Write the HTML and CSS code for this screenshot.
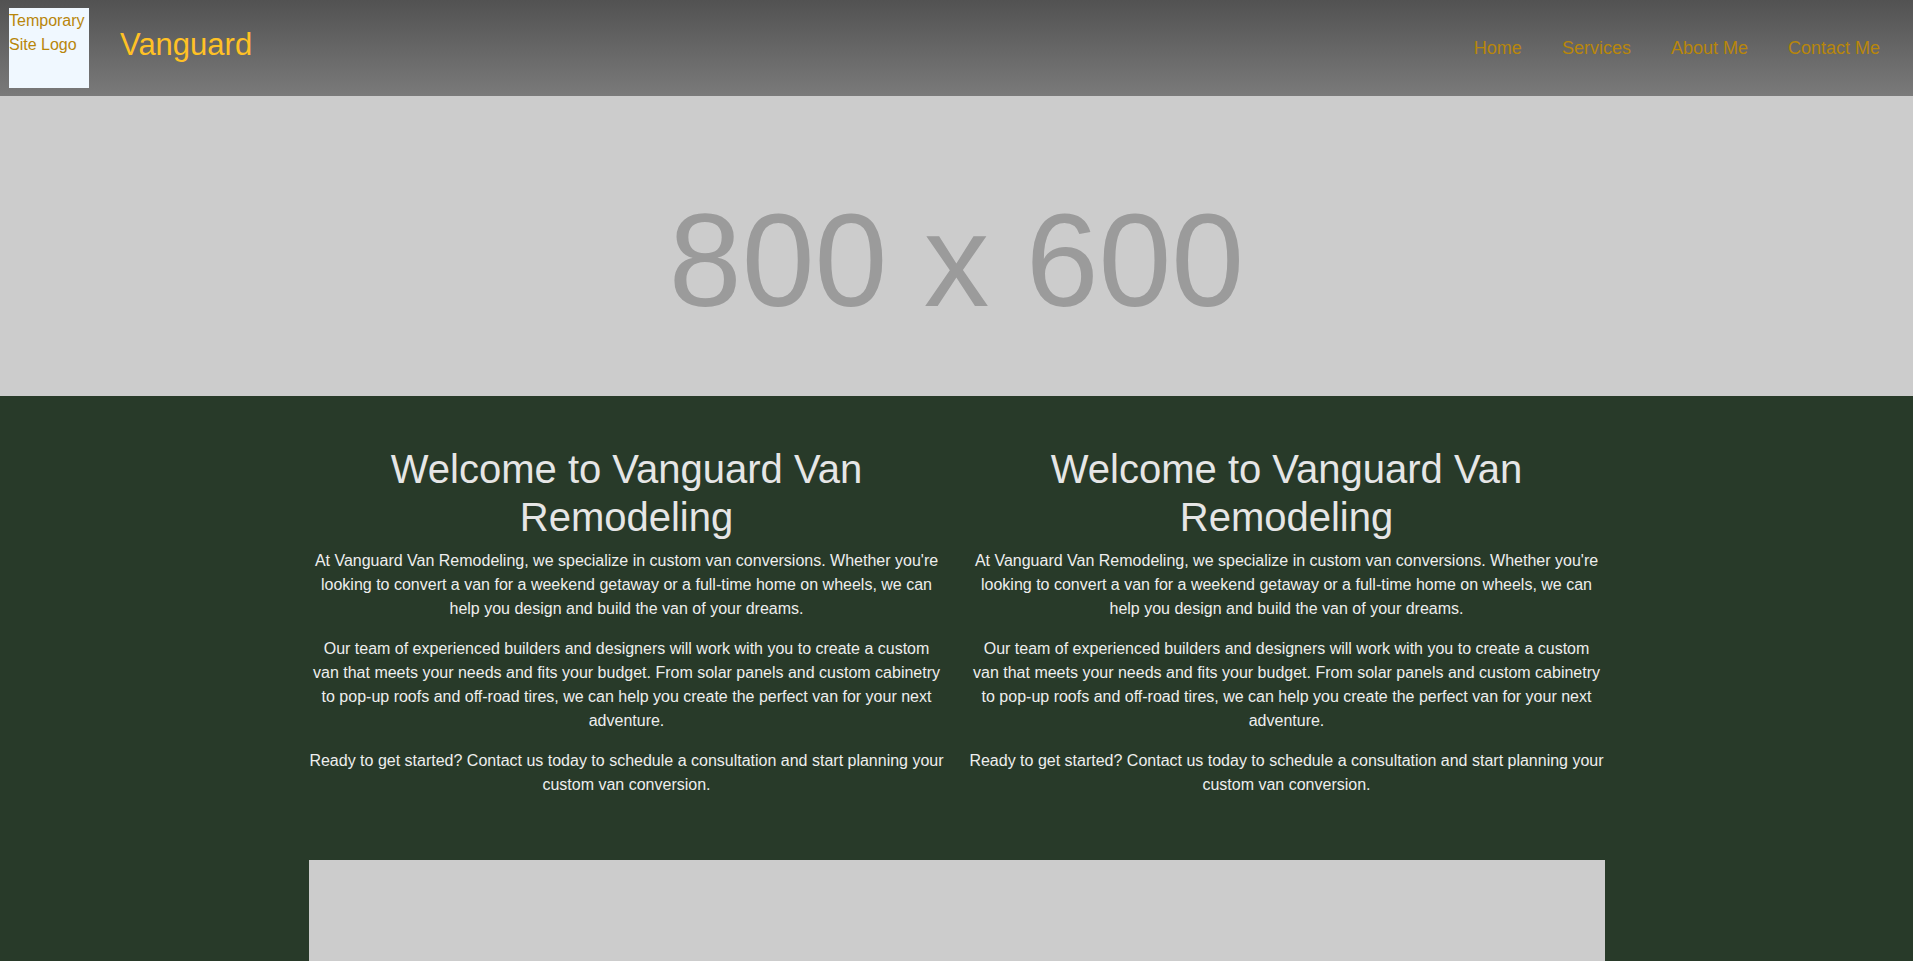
FILE: index.html
```html
<!DOCTYPE html>
<html lang="en">
<head>
<meta charset="utf-8">
<title>Vanguard Van Remodeling</title>
<link rel="stylesheet" href="styles.css">
</head>
<body>
<header class="site-header">
  <div class="brand">
    <div class="logo">Temporary Site Logo</div>
    <div class="site-name">Vanguard</div>
  </div>
  <nav class="main-nav">
    <a href="#">Home</a>
    <a href="#">Services</a>
    <a href="#">About Me</a>
    <a href="#">Contact Me</a>
  </nav>
</header>
<section class="hero">
  <div class="hero-text">800 x 600</div>
</section>
<main class="content">
  <div class="container">
    <div class="columns">
      <article class="col">
        <h2>Welcome to Vanguard Van Remodeling</h2>
        <p>At Vanguard Van Remodeling, we specialize in custom van conversions. Whether you're looking to convert a van for a weekend getaway or a full-time home on wheels, we can help you design and build the van of your dreams.</p>
        <p>Our team of experienced builders and designers will work with you to create a custom van that meets your needs and fits your budget. From solar panels and custom cabinetry to pop-up roofs and off-road tires, we can help you create the perfect van for your next adventure.</p>
        <p>Ready to get started? Contact us today to schedule a consultation and start planning your custom van conversion.</p>
      </article>
      <article class="col">
        <h2>Welcome to Vanguard Van Remodeling</h2>
        <p>At Vanguard Van Remodeling, we specialize in custom van conversions. Whether you're looking to convert a van for a weekend getaway or a full-time home on wheels, we can help you design and build the van of your dreams.</p>
        <p>Our team of experienced builders and designers will work with you to create a custom van that meets your needs and fits your budget. From solar panels and custom cabinetry to pop-up roofs and off-road tires, we can help you create the perfect van for your next adventure.</p>
        <p>Ready to get started? Contact us today to schedule a consultation and start planning your custom van conversion.</p>
      </article>
    </div>
    <div class="placeholder"></div>
  </div>
</main>
</body>
</html>
```
FILE: styles.css
```css
html, body {
  margin: 0;
  padding: 0;
}
body {
  font-family: "Liberation Sans", Arial, sans-serif;
  font-size: 16px;
  line-height: 1.5;
  background: #283a29;
  overflow: hidden;
}
.site-header {
  height: 96px;
  box-sizing: border-box;
  padding: 8px 33px 8px 9px;
  display: flex;
  justify-content: space-between;
  align-items: flex-start;
  background: linear-gradient(#525252, #7a7a7a);
}
.brand {
  display: flex;
  align-items: flex-start;
}
.logo {
  width: 80px;
  height: 80px;
  box-sizing: border-box;
  padding-top: 1px;
  background: #f0f8ff;
  color: #b8860b;
  font-size: 16px;
  line-height: 24px;
}
.site-name {
  margin-left: 31px;
  margin-top: 14px;
  font-size: 31px;
  line-height: 46px;
  color: #ffc125;
}
.main-nav {
  display: flex;
  gap: 40px;
  margin-top: 27px;
}
.main-nav a {
  color: #b8860b;
  text-decoration: none;
  font-size: 18px;
  line-height: 27px;
}
.hero {
  height: 300px;
  box-sizing: border-box;
  padding-top: 90px;
  background: #cccccc;
  text-align: center;
}
.hero-text {
  font-size: 131px;
  line-height: 150px;
  color: #9b9b9b;
  filter: blur(0.6px);
}
.content {
  padding-top: 49px;
}
.container {
  width: 1296px;
  margin: 0 auto;
}
.columns {
  display: grid;
  grid-template-columns: 1fr 1fr;
  gap: 24px;
  padding-bottom: 47px;
}
.col {
  padding: 0 0.5px;
  text-align: center;
  color: #eeeeee;
}
.col h2 {
  margin: 0 0 8px;
  font-size: 40px;
  font-weight: normal;
  line-height: 48px;
  color: #e6e6e6;
}
.col p {
  margin: 0 0 16px;
}
.placeholder {
  height: 400px;
  background: #cccccc;
}
```
